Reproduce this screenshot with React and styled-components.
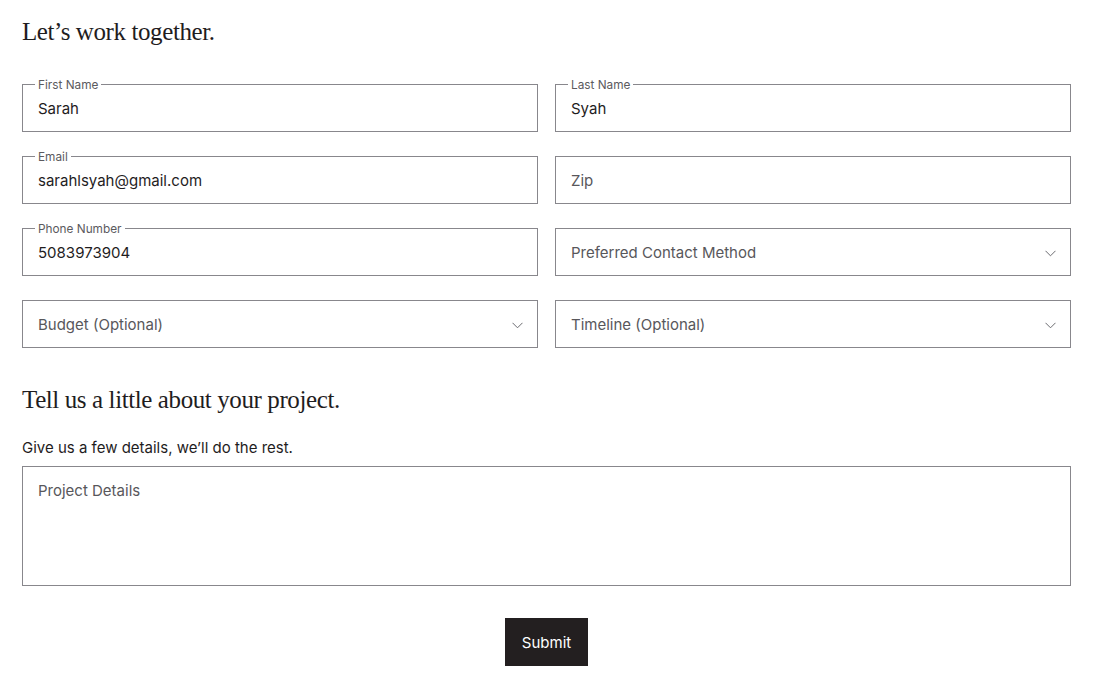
import styled, { createGlobalStyle } from "styled-components";

const Global = createGlobalStyle`
  body {
    margin: 0;
    background: #fff;
    font-family: Inter, "Liberation Sans", sans-serif;
    color: #1f1d1e;
  }
`;

function Chevron() {
  return (
    <svg width="11" height="7" viewBox="0 0 11 7" fill="none">
      <path d="M0.5 0.8 L5.5 5.8 L10.5 0.8" stroke="#6b6b70" strokeWidth="1" />
    </svg>
  );
}

function Field({ label, value, placeholder, select }) {
  return (
    <Box>
      {label && <Label>{label}</Label>}
      <Value $empty={!value}>{value || placeholder}</Value>
      {select && <Chevron />}
    </Box>
  );
}

export default function App() {
  return (
    <Page>
      <Global />
      <Heading>Let’s work together.</Heading>
      <Grid>
        <Field label="First Name" value="Sarah" />
        <Field label="Last Name" value="Syah" />
        <Field label="Email" value="sarahlsyah@gmail.com" />
        <Field placeholder="Zip" />
        <Field label="Phone Number" value="5083973904" />
        <Field placeholder="Preferred Contact Method" select />
        <Field placeholder="Budget (Optional)" select />
        <Field placeholder="Timeline (Optional)" select />
      </Grid>
      <SubHeading>Tell us a little about your project.</SubHeading>
      <Hint>Give us a few details, we’ll do the rest.</Hint>
      <TextArea>
        <Value $empty>Project Details</Value>
      </TextArea>
      <Actions>
        <Submit>Submit</Submit>
      </Actions>
    </Page>
  );
}

const Page = styled.div`
  width: 1049px;
  margin-left: 22px;
  padding-top: 16px;
`;
const Heading = styled.h1`
  margin: 0;
  font-family: "Liberation Serif", serif;
  font-weight: 400;
  font-size: 25px;
  line-height: 32px;
  letter-spacing: -0.4px;
  color: #1f1d1e;
`;
const Grid = styled.div`
  display: grid;
  grid-template-columns: 1fr 1fr;
  column-gap: 17px;
  row-gap: 24px;
  margin-top: 36px;
`;
const Box = styled.div`
  position: relative;
  height: 48px;
  box-sizing: border-box;
  border: 1px solid #88878c;
  display: flex;
  align-items: center;
  justify-content: space-between;
  padding: 2px 14px 0 15px;
`;
const Label = styled.span`
  position: absolute;
  top: -7px;
  left: 12px;
  padding: 0 3px;
  background: #fff;
  font-size: 11.8px;
  line-height: 14px;
  color: #5b5a5e;
`;
const Value = styled.span`
  font-size: 15px;
  line-height: 20px;
  color: ${(p) => (p.$empty ? "#58575b" : "#1f1d1e")};
`;
const SubHeading = styled(Heading)`
  margin-top: 36px;
`;
const Hint = styled.p`
  margin: 22px 0 0;
  font-size: 15px;
  line-height: 20px;
  color: #1f1d1e;
`;
const TextArea = styled.div`
  margin-top: 8px;
  height: 120px;
  box-sizing: border-box;
  border: 1px solid #88878c;
  padding: 13px 15px;
`;
const Actions = styled.div`
  display: flex;
  justify-content: center;
  margin-top: 32px;
`;
const Submit = styled.button`
  width: 83px;
  height: 48px;
  border: 0;
  background: #231f20;
  color: #fff;
  font-family: Inter, "Liberation Sans", sans-serif;
  font-size: 15px;
`;
